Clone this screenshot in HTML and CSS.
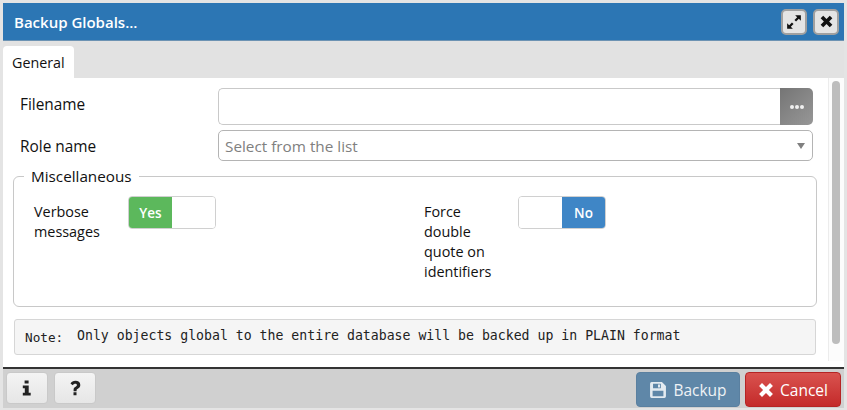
FILE: index.html
```html
<!DOCTYPE html>
<html lang="en">
<head>
<meta charset="utf-8">
<title>Backup Globals</title>
<link rel="stylesheet" href="styles.css">
</head>
<body>
<div class="dialog">
  <header class="titlebar">
    <h1 class="title">Backup Globals...</h1>
    <div class="title-actions">
      <button class="win-btn" aria-label="Maximize">
        <svg width="16" height="16" viewBox="0 0 14 14"><path d="M8 1h5v5l-1.800-1.800-2.400 2.400-1.400-1.400 2.400-2.400zM6 13H1V8l1.800 1.800 2.400-2.400 1.400 1.400-2.400 2.400z" fill="#111"/></svg>
      </button>
      <button class="win-btn" aria-label="Close">
        <svg width="13" height="13" viewBox="0 0 12 12"><path d="M3 .6 6 3.600 9 .6 11.400 3 8.400 6l3 3L9 11.400l-3-3-3 3L.6 9l3-3-3-3z" fill="#111"/></svg>
      </button>
    </div>
  </header>
  <nav class="tabstrip"><div class="tab">General</div></nav>
  <main class="body">
    <div class="content">
      <div class="row row-file">
        <label class="row-label row-label-file">Filename</label>
        <div class="file-input">
          <div class="file-field"></div>
          <div class="file-btn"><span class="dot"></span><span class="dot"></span><span class="dot"></span></div>
        </div>
      </div>
      <div class="row row-role">
        <label class="row-label row-label-role">Role name</label>
        <div class="select"><span>Select from the list</span><i class="caret"></i></div>
      </div>
      <fieldset class="group">
        <legend class="group-title">Miscellaneous</legend>
        <div class="group-grid">
          <div class="opt">
            <div class="opt-label">Verbose messages</div>
            <div class="toggle"><span class="on">Yes</span><span class="off"></span></div>
          </div>
          <div class="opt">
            <div class="opt-label">Force double quote on identifiers</div>
            <div class="toggle"><span class="off"></span><span class="no">No</span></div>
          </div>
        </div>
      </fieldset>
      <div class="note"><span class="note-key">Note:</span><span class="note-text">Only objects global to the entire database will be backed up in PLAIN format</span></div>
    </div>
    <div class="scroll"><div class="thumb"></div></div>
  </main>
  <footer class="footer">
    <div class="foot-left">
      <button class="help-btn" aria-label="Info">
        <svg width="10" height="16" viewBox="0 0 10 16"><path d="M2.600.5h4v3h-4zM.8 5.500h5.900v7.200h2v2.800H.8v-2.800h2V8.300h-2z" fill="#222"/></svg>
      </button>
      <button class="help-btn" aria-label="Help">
        <svg width="11" height="16" viewBox="0 0 11 16"><path d="M3.600 11.200V9.600c0-1.500.9-2.100 2-2.800.8-.5 1.300-.9 1.300-1.700 0-.9-.7-1.400-1.600-1.400-1 0-1.800.5-2.600 1.500L.5 3.600C1.600 1.800 3.200.8 5.500.8c2.700 0 4.800 1.500 4.800 4.100 0 1.900-1 2.800-2.200 3.600-.9.6-1.500 1-1.500 1.800v.9zM3.500 12.300h3v3h-3z" fill="#222"/></svg>
      </button>
    </div>
    <div class="foot-right">
      <button class="act act-backup">
        <svg width="18" height="18" viewBox="0 0 17 17"><path fill-rule="evenodd" d="M2.500 1h9.700L16 4.800v9.700a1.500 1.500 0 0 1-1.500 1.500h-12A1.500 1.500 0 0 1 1 14.500v-12A1.500 1.500 0 0 1 2.500 1zm1.300 1.700v4.100h7.400V2.700zm4.700.5h1.900v3H8.500zM3.400 9.300v5h10.200v-5z" fill="#e4ebf1"/></svg>
        Backup
      </button>
      <button class="act act-cancel">
        <svg width="16" height="16" viewBox="0 0 12 12"><path d="M3 .8 6 3.800 9 .8 11.200 3 8.200 6l3 3L9 11.200l-3-3-3 3L.8 9l3-3-3-3z" fill="#fff"/></svg>
        Cancel
      </button>
    </div>
  </footer>
</div>
</body>
</html>
```
FILE: styles.css
```css
* { box-sizing: border-box; }
html, body { margin: 0; height: 100%; }
body {
  background: #e4e4e4;
  padding: 3px;
  font-family: "Open Sans", "Noto Sans", sans-serif;
  color: #111;
  font-size: 14px;
}
button { font-family: inherit; padding: 0; cursor: default; }
.dialog { width: 841px; height: 405px; display: flex; flex-direction: column; }

.titlebar {
  height: 38px;
  flex: none;
  background: #2c76b4;
  border-bottom: 1px solid #6d93b3;
  display: flex;
  align-items: center;
  justify-content: space-between;
  padding: 0 5px 0 11px;
}
.title { margin: 0; font-size: 15px; font-weight: 600; color: #fff; }
.title-actions { display: flex; gap: 6px; }
.win-btn {
  width: 26px; height: 26px;
  border: 2px solid #a0a0a0;
  border-radius: 5px;
  background: #e4e4e4;
  display: flex; align-items: center; justify-content: center;
}

.tabstrip { height: 37px; flex: none; background: #e2e2e2; display: flex; align-items: flex-end; }
.tab {
  width: 71px; height: 32px;
  background: #fff;
  border-radius: 4px 4px 0 0;
  padding: 7px 0 0 9px;
  font-size: 14.300px;
  line-height: 20px;
}

.body { height: 289px; flex: none; background: #fff; display: flex; }
.content { flex: 1; min-width: 0; padding: 10px 11px 0 10px; }
.scroll { width: 16px; flex: none; background: #fcfcfc; border-left: 1px solid #ececec; padding: 3px 0 0 3px; height: 283px; }
.thumb { width: 8px; height: 263px; background: #bdbdbd; border-radius: 4px; }

.row { display: flex; align-items: center; margin-right: 4px; }
.row-label { width: 205px; padding-left: 7px; font-size: 15.400px; }
.row-label-file { padding-bottom: 5px; }
.row-label-role { padding-top: 2px; }
.row-file { height: 37px; }
.row-role { height: 31px; margin-top: 5px; }

.file-input { flex: 1; height: 37px; display: flex; }
.file-field {
  flex: 1;
  border: 1px solid #c9c9c9;
  border-right: 0;
  border-radius: 5px 0 0 5px;
  background: #fff;
}
.file-btn {
  width: 33px;
  border-radius: 0 5px 5px 0;
  background: linear-gradient(135deg, #757575, #979797);
  display: flex; align-items: center; justify-content: center; gap: 1px;
}
.dot { width: 4px; height: 4px; background: #f0f0f0; border-radius: 50%; }

.select {
  flex: 1; height: 31px;
  border: 1px solid #b4b4b4;
  border-radius: 5px;
  display: flex; align-items: center; justify-content: space-between;
  padding: 0 7px 0 6px;
  color: #808080;
  font-size: 15.300px;
}
.caret { width: 0; height: 0; border: 4.500px solid transparent; border-top: 6px solid #808080; border-bottom: 0; }

.group {
  margin: 5px 0 0;
  padding: 0;
  height: 141px;
  border: 1px solid #c8c8c8;
  border-radius: 6px;
}
.group-title { margin-left: 10px; padding: 0 7px; font-size: 15.250px; line-height: 20px; }
.group-grid { display: grid; grid-template-columns: 390px 1fr; padding: 10px 0 0 20px; }
.opt { display: flex; align-items: flex-start; }
.opt-label { width: 94px; padding: 6px 12px 0 0; font-size: 14.400px; line-height: 20px; }

.toggle {
  width: 88px; height: 33px;
  border: 1px solid #d0d0d0;
  border-radius: 4px;
  display: flex;
  overflow: hidden;
  font-size: 13.500px;
  font-weight: 600;
  color: #fff;
  flex: none;
}
.toggle span { flex: 1; display: flex; align-items: center; justify-content: center; }
.on { background: #5cb85c; }
.no { background: #3f86c6; }
.off { background: #fff; }

.note {
  margin: 12px 1px 0 1px;
  height: 36px;
  border: 1px solid #d6d6d6;
  border-radius: 3px;
  background: #f5f5f5;
  font-family: "DejaVu Sans Mono", monospace;
  color: #222;
  display: flex;
  padding: 7px 0 0 10px;
}
.note-key { padding-top: 3px; width: 52px; flex: none; font-size: 12.700px; }
.note-text { font-size: 13.200px; line-height: 18px; white-space: nowrap; }

.footer {
  flex: 1;
  border-top: 2px solid #333;
  background: #d0d0d0;
  display: flex;
  justify-content: space-between;
  padding: 3px 3px 0 3px;
}
.foot-left { display: flex; gap: 6px; }
.help-btn {
  width: 42px; height: 32px;
  border: 1px solid #c9c9c9;
  border-radius: 4px;
  background: linear-gradient(#f4f4f4, #e6e6e6);
  display: flex; align-items: center; justify-content: center;
}
.foot-right { display: flex; gap: 5px; }
.act {
  height: 35px;
  border-radius: 4px;
  color: #f0f0f0;
  font-size: 15.500px;
  display: flex; align-items: center; justify-content: center; gap: 6px;
}
.act-backup { width: 104px; background: #5f87a8; border: 1px solid #5a80a0; color: #eef2f5; }
.act-cancel { width: 96px; background: linear-gradient(#d9534f, #c42a2a); border: 1px solid #b52424; color: #fff; }
```
